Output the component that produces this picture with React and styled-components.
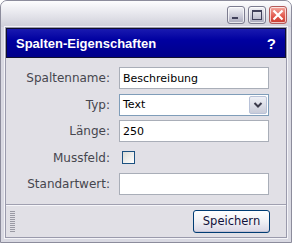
import React from 'react'
import styled, { createGlobalStyle } from 'styled-components'

const Global = createGlobalStyle`
  html, body { margin: 0; padding: 0; background: #ffffff; }
  * { box-sizing: border-box; }
  body { font-family: "DejaVu Sans", Tahoma, sans-serif; font-size: 11px; }
`

const Window = styled.div`
  width: 292px;
  height: 243px;
  border: 1px solid #8c8c9c;
  border-radius: 7px 7px 0 0;
  background: #d9d9e2;
  display: flex;
  flex-direction: column;
  overflow: hidden;
`

const TitleBar = styled.div`
  height: 26px;
  flex: none;
  background: linear-gradient(#fdfdfe, #e8e8ee 45%, #cfcfd9);
  display: flex;
  justify-content: flex-end;
  align-items: center;
  gap: 3px;
  padding: 1px 4px 0 0;
`

const WinButton = styled.div`
  width: 18px;
  height: 18px;
  border-radius: 3px;
  border: 1px solid ${p => (p.$close ? '#b35a5a' : '#7c7c90')};
  background: ${p =>
    p.$close
      ? 'linear-gradient(#f3a9a0, #e2584c 60%, #c83a30)'
      : 'linear-gradient(#f4f4f8, #c8c8d6 60%, #a8a8bc)'};
  box-shadow: inset 0 0 0 1px rgba(255,255,255,0.7);
  display: flex;
  align-items: center;
  justify-content: center;
`

const Frame = styled.div`
  flex: 1;
  margin: 0 4px 4px 4px;
  border: 1px solid #9a9aac;
  outline: 1px solid #f4f4f8;
  display: flex;
  flex-direction: column;
  background: #e1e0e6;
`

const Header = styled.div`
  height: 30px;
  flex: none;
  border: 1px solid #101030;
  background: linear-gradient(#1a1ab0, #0000a0 40%, #00008a);
  color: #ffffff;
  font-family: "Liberation Sans", Arial, sans-serif;
  font-weight: bold;
  font-size: 13px;
  display: flex;
  align-items: center;
  justify-content: space-between;
  padding: 0 9px 0 9px;
`

const Help = styled.span`
  font-size: 15px;
`

const Form = styled.div`
  display: grid;
  grid-template-columns: 104px 150px;
  column-gap: 9px;
  row-gap: 4.5px;
  grid-auto-rows: 22px;
  padding: 9px 0 9px 0;
  align-items: center;
`

const Label = styled.div`
  text-align: right;
  color: #46464e;
  font-size: 12px;
`

const Input = styled.div`
  height: 22px;
  border: 1px solid #a9aeb8;
  background: #ffffff;
  color: #000;
  font-size: 11px;
  display: flex;
  align-items: center;
  padding-left: 3px;
`

const Select = styled(Input)`
  border-color: #7f9db9;
  padding-right: 1px;
  justify-content: space-between;
`

const DropButton = styled.div`
  width: 18px;
  height: 18px;
  border: 1px solid #b8c2d8;
  border-radius: 2px;
  background: linear-gradient(#eef0f6, #c9ccd9);
  display: flex;
  align-items: center;
  justify-content: center;
`

const Check = styled.div`
  width: 13px;
  height: 13px;
  margin-left: 3px;
  border: 1px solid #1c5180;
  background: linear-gradient(135deg, #dcdcd6, #ffffff);
`

const Footer = styled.div`
  flex: 1;
  border-top: 1px solid #a0a0b0;
  box-shadow: inset 0 1px 0 #f6f6fa;
  display: flex;
  align-items: center;
  justify-content: space-between;
  padding: 0 16px 0 4px;
`

const Grip = styled.div`
  width: 5px;
  height: 21px;
  background: repeating-linear-gradient(#9a9aa4 0 1px, transparent 1px 2px);
`

const Button = styled.div`
  width: 77px;
  height: 23px;
  border: 1px solid #003c74;
  border-radius: 3px;
  background: linear-gradient(#ffffff, #f0f0f4 50%, #d8d6e4);
  box-shadow: inset 0 -1px 0 #c4c2d4;
  display: flex;
  align-items: center;
  justify-content: center;
  color: #10103a;
  font-size: 11.5px;
`

export default function App() {
  return (
    <>
      <Global />
      <Window>
        <TitleBar>
          <WinButton>
            <svg width="16" height="16" viewBox="0 0 16 16">
              <rect x="4" y="10" width="6" height="2" fill="#40405a" />
            </svg>
          </WinButton>
          <WinButton>
            <svg width="16" height="16" viewBox="0 0 16 16">
              <rect x="3.5" y="3.5" width="9" height="9" fill="none" stroke="#40405a" />
              <rect x="3" y="3" width="10" height="2" fill="#40405a" />
            </svg>
          </WinButton>
          <WinButton $close>
            <svg width="16" height="16" viewBox="0 0 16 16">
              <path d="M3.5 3.5 L12.5 12.5 M12.5 3.5 L3.5 12.5" stroke="#ffffff" strokeWidth="2.2" />
            </svg>
          </WinButton>
        </TitleBar>
        <Frame>
          <Header>
            <span>Spalten-Eigenschaften</span>
            <Help>?</Help>
          </Header>
          <Form>
            <Label>Spaltenname:</Label>
            <Input>Beschreibung</Input>
            <Label>Typ:</Label>
            <Select>
              <span>Text</span>
              <DropButton>
                <svg width="10" height="8" viewBox="0 0 10 8">
                  <path d="M1.5 2 L5 5.5 L8.5 2" fill="none" stroke="#3a3a4a" strokeWidth="2" />
                </svg>
              </DropButton>
            </Select>
            <Label>Länge:</Label>
            <Input>250</Input>
            <Label>Mussfeld:</Label>
            <div><Check /></div>
            <Label>Standartwert:</Label>
            <Input />
          </Form>
          <Footer>
            <Grip />
            <Button>Speichern</Button>
          </Footer>
        </Frame>
      </Window>
    </>
  )
}
